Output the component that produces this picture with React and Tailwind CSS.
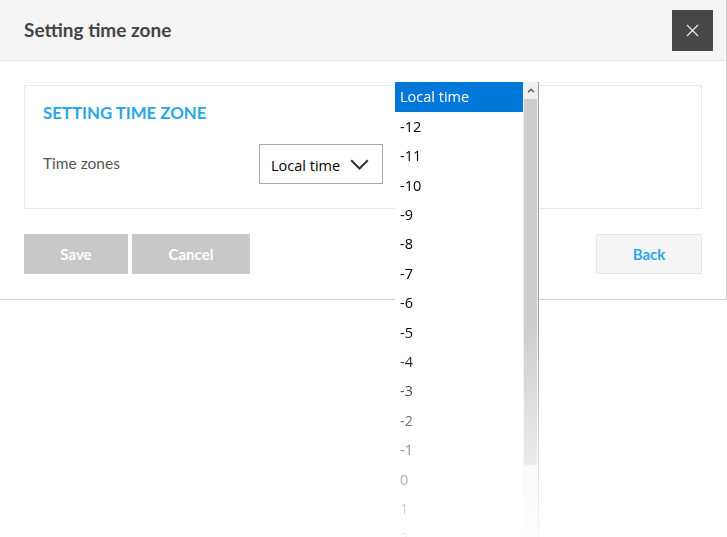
import React from 'react';

// offsets shown in the open list
const zones = ['-12', '-11', '-10', '-9', '-8', '-7', '-6', '-5', '-4', '-3', '-2', '-1', '0', '1', '2'];

function ZoneList() {
  return (
    <div className="absolute left-[395px] top-[82px] w-[144px] h-[470px] flex bg-white [mask-image:linear-gradient(to_bottom,black_52%,transparent_100%)]">
      <ul className="flex-1 font-['Open_Sans',sans-serif] text-[14.5px] text-black">
        <li className="h-[30px] pl-[5px] flex items-center bg-[#0078d7] text-white">Local time</li>
        {zones.map((z) => (
          <li key={z} className="h-[29.4px] pl-[5px] flex items-center">{z}</li>
        ))}
      </ul>
      {/* scrollbar */}
      <div className="w-[16px] flex flex-col bg-[#f0f0f0] border-r border-[#a0a0a0]">
        <div className="h-[17px] flex items-center justify-center">
          <svg width="8" height="5" viewBox="0 0 8 5" fill="none">
            <path d="M1 4.2 L4 1.2 L7 4.2" stroke="#606060" strokeWidth="1.5" />
          </svg>
        </div>
        <div className="h-[366px] mx-[1px] bg-[#cdcdcd]" />
      </div>
    </div>
  );
}

export default function App() {
  return (
    <div className="relative w-[727px] h-[537px] bg-white font-['Lato',sans-serif] overflow-hidden">
      <div className="w-[727px] border-r border-b border-[#d0d0d0] bg-white">
        {/* header */}
        <div className="h-[61px] bg-[#f5f5f5] border-b border-[#e4e4e4] flex items-center justify-between pl-[24px] pr-[13px]">
          <h2 className="text-[19px] font-bold text-[#444]">Setting time zone</h2>
          <button className="w-[41px] h-[41px] bg-[#474747] flex items-center justify-center">
            <svg width="13" height="13" viewBox="0 0 13 13" fill="none">
              <path d="M1 1 L12 12 M12 1 L1 12" stroke="#e8e8e8" strokeWidth="1.3" />
            </svg>
          </button>
        </div>

        {/* body */}
        <div className="px-[24px] pt-[24px] pb-[25px]">
          <div className="border border-[#e8e8e8] pl-[18px] pr-[18px] pt-[15px] pb-[24px]">
            <h3 className="h-[24px] leading-[24px] text-[16.8px] font-bold uppercase text-[#29a6e6]">Setting time zone</h3>
            <div className="mt-[19px] flex items-center">
              <span className="w-[216px] text-[15.5px] text-[#555]">Time zones</span>
              <div className="w-[124px] h-[40px] border border-[#a9a9a9] flex items-center justify-between pl-[11px] pr-[13px] font-['Open_Sans',sans-serif] text-[14.5px] text-black">
                <span className="mt-[4px]">Local time</span>
                <svg width="19" height="11" viewBox="0 0 19 11" fill="none">
                  <path d="M1.2 1.2 L9.5 9.5 L17.8 1.2" stroke="#333" strokeWidth="2" />
                </svg>
              </div>
            </div>
          </div>

          <div className="mt-[25px] flex items-center">
            <button className="w-[104px] h-[40px] bg-[#c8c8c8] text-white text-[15px] font-bold">Save</button>
            <button className="ml-[4px] w-[118px] h-[40px] bg-[#c8c8c8] text-white text-[15px] font-bold">Cancel</button>
            <button className="ml-auto w-[106px] h-[40px] bg-[#f5f5f5] border border-[#e6e6e6] text-[#29a6e6] text-[15px] font-bold">Back</button>
          </div>
        </div>
      </div>

      <ZoneList />
    </div>
  );
}
